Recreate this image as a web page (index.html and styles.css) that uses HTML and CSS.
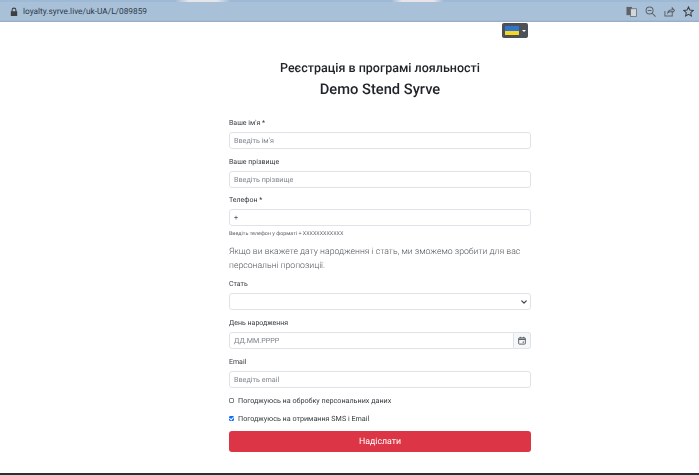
FILE: index.html
```html
<!DOCTYPE html>
<html lang="uk">
<head>
<meta charset="utf-8">
<title>Реєстрація</title>
<link rel="stylesheet" href="styles.css">
</head>
<body>
<header class="chrome">
  <div class="address">
    <svg class="lock" viewBox="0 0 10 12" width="8" height="10"><path fill="#3c4043" d="M2 5V3.5a3 3 0 0 1 6 0V5h1v6H1V5zm1.300 0h3.400V3.500a1.700 1.700 0 0 0-3.400 0z"/></svg>
    <span class="url">loyalty.syrve.live/uk-UA/L/089859</span>
  </div>
  <div class="tools">
    <svg viewBox="0 0 12 12" width="11" height="11"><rect x="0.500" y="1" width="6" height="9" fill="#5f6368"/><rect x="5" y="3" width="6.500" height="8.500" fill="#cfd6dc" stroke="#5f6368" stroke-width=".8"/></svg>
    <svg viewBox="0 0 12 12" width="11" height="11" fill="none" stroke="#5f6368" stroke-width="1.100"><circle cx="5" cy="5" r="3.800"/><path d="M8 8l3.500 3.500M3 5h4"/></svg>
    <svg viewBox="0 0 12 12" width="11" height="11" fill="none" stroke="#5f6368" stroke-width="1.100"><path d="M1 5.500v5.500h8V8M4 7.500C4.500 5 6.500 4 9 4V2l2.500 3L9 7.500V6C7 6 5.500 6.300 4 7.500z"/></svg>
    <svg viewBox="0 0 12 12" width="11" height="11" fill="none" stroke="#3c4043" stroke-width="1.100"><path d="M6 1l1.500 3.400 3.700.4-2.800 2.400.8 3.600L6 9l-3.200 1.800.8-3.600L.8 4.800l3.700-.4z"/></svg>
  </div>
</header>
<div class="langbar">
  <button class="lang" type="button">
    <span class="flag"><span class="flag-blue"></span><span class="flag-yellow"></span></span>
    <span class="caret"></span>
  </button>
</div>
<main class="page">
  <h1 class="title">Реєстрація в програмі лояльності</h1>
  <h2 class="subtitle">Demo Stend Syrve</h2>
  <form class="form">
    <div class="field">
      <label class="label">Ваше ім'я *</label>
      <input class="input" type="text" placeholder="Введіть ім'я">
    </div>
    <div class="field field-tight">
      <label class="label">Ваше прізвище</label>
      <input class="input" type="text" placeholder="Введіть прізвище">
    </div>
    <div class="field field-phone">
      <label class="label">Телефон *</label>
      <input class="input" type="text" value="+">
      <small class="hint">Введіть телефон у форматі + XXXXXXXXXXXX</small>
    </div>
    <p class="note">Якщо ви вкажете дату народження і стать, ми зможемо зробити для вас персональні пропозиції.</p>
    <div class="field">
      <label class="label">Стать</label>
      <div class="select">
        <svg viewBox="0 0 16 16" width="6" height="6" fill="none" stroke="#343a40" stroke-width="3" stroke-linecap="round" stroke-linejoin="round"><path d="M2 5l6 6 6-6"/></svg>
      </div>
    </div>
    <div class="field">
      <label class="label">День народження</label>
      <div class="group">
        <input class="input input-group" type="text" placeholder="ДД.ММ.РРРР">
        <span class="addon">
          <svg viewBox="0 0 12 12" width="8" height="9" fill="none" stroke="#495057" stroke-width="1.300"><rect x="1" y="2" width="10" height="9.400" rx="1"/><path d="M1 4.200h10" stroke-width="1.800"/><path d="M3.500 .5v2M8.500 .5v2"/><rect x="7" y="7.500" width="1.800" height="1.800" fill="#495057" stroke="none"/></svg>
        </span>
      </div>
    </div>
    <div class="field field-email">
      <label class="label">Email</label>
      <input class="input" type="text" placeholder="Введіть email">
    </div>
    <label class="check"><input class="box" type="checkbox"><span>Погоджуюсь на обробку персональних даних</span></label>
    <label class="check"><input class="box" type="checkbox" checked><span>Погоджуюсь на отримання SMS і Email</span></label>
    <button class="submit" type="button">Надіслати</button>
  </form>
</main>
<div class="taskbar"></div>
</body>
</html>
```
FILE: styles.css
```css
* { box-sizing: border-box; }
html, body { margin: 0; height: 100%; }
body {
  width: 699px;
  height: 475px;
  overflow: hidden;
  background: #fff;
  font-family: Roboto, "Noto Sans", sans-serif;
  color: #212529;
  display: flex;
  flex-direction: column;
  text-rendering: geometricPrecision;
  filter: blur(0.35px);
}
.chrome {
  height: 22px;
  flex: none;
  background:
    linear-gradient(90deg, #9db9d6 0, #9db9d6 25%, #e4e6ec 27%, #e4e6ec 31%, #9db9d6 33%, #9db9d6 56%, #e8e4ea 57.500%, #e8e4ea 62%, #9db9d6 63.500%, #9db9d6 100%) top / 100% 2px no-repeat,
    linear-gradient(#a9c1d8 0, #a9c1d8 90%, #93aac2 100%);
  display: flex;
  align-items: center;
  justify-content: space-between;
  padding: 1px 5px 0 10px;
}
.address { display: flex; align-items: center; gap: 5px; }
.lock { display: block; }
.url { font-size: 8.300px; color: #2f3a48; }
.tools { display: flex; gap: 8px; }
.tools svg { display: block; }
.langbar {
  flex: none;
  height: 16px;
  padding: 1px 171px 0 0;
  display: flex;
  justify-content: flex-end;
}
.lang {
  width: 26px;
  height: 15px;
  padding: 0 0 0 3px;
  border: 0;
  border-radius: 2px;
  background: #4c5157;
  display: flex;
  align-items: center;
  gap: 3px;
}
.flag { width: 14px; height: 9px; display: flex; flex-direction: column; }
.flag-blue { flex: 1; background: #2f75d0; }
.flag-yellow { flex: 1; background: #f7d81c; }
.caret { border: 2px solid transparent; border-top-color: #fff; border-bottom: 0; width: 0; height: 0; }
.page { width: 302px; margin-left: 229px; padding-top: 22px; flex: 1; }
.title { margin: 0; text-align: center; font-size: 12.500px; line-height: 17px; font-weight: 500; color: #212529; }
.subtitle { margin: 2px 0 0; text-align: center; font-size: 14.700px; line-height: 20px; font-weight: 500; color: #212529; }
.form { margin-top: 18px; display: flex; flex-direction: column; }
.field { display: flex; flex-direction: column; margin-bottom: 7px; }
.field-tight { margin-bottom: 6px; }
.label { font-size: 7px; line-height: 11px; margin: 1px 0 3px; color: #343a40; }
.input {
  width: 100%;
  height: 17px;
  border: 1px solid #dfe3e7;
  border-radius: 3px;
  padding: 0 4px;
  font: 7.200px Roboto, sans-serif;
  text-rendering: geometricPrecision;
  color: #495057;
  background: #fff;
  outline: 0;
}
.input::placeholder { color: #7d858d; opacity: 1; }
.field-phone { margin-bottom: 0; }
.hint { font-size: 5.400px; line-height: 8px; margin-top: 4px; color: #5f666d; }
.note { margin: 7px 0 5px; font-size: 8.700px; line-height: 14px; font-weight: 300; color: #4f555b; }
.select {
  height: 17px;
  border: 1px solid #dfe3e7;
  border-radius: 3px;
  display: flex;
  align-items: center;
  justify-content: flex-end;
  padding-right: 3px;
}
.group { display: flex; }
.input-group { flex: 1; border-radius: 3px 0 0 3px; }
.addon {
  width: 17px;
  height: 17px;
  border: 1px solid #dfe3e7;
  border-left: 0;
  border-radius: 0 3px 3px 0;
  background: #f6f7f8;
  display: flex;
  align-items: center;
  justify-content: center;
}
.field-email { margin-bottom: 7px; }
.check { display: flex; align-items: center; gap: 4px; font-size: 7.200px; line-height: 11px; color: #343a40; margin-bottom: 7px; }
.box {
  appearance: none;
  margin: 0;
  width: 5px;
  height: 5px;
  border: 1px solid #7d858d;
  border-radius: 1px;
  background: #fff;
  position: relative;
}
.box:checked { background: #0d6efd; border-color: #0d6efd; }
.box:checked::after {
  content: "";
  position: absolute;
  left: 0;
  top: -1px;
  width: 2px;
  height: 3px;
  border: solid #fff;
  border-width: 0 1px 1px 0;
  transform: rotate(45deg);
}
.submit {
  height: 21px;
  margin-top: 0;
  border: 0;
  border-radius: 3px;
  background: #dc3545;
  color: #fff;
  font: 8.800px Roboto, sans-serif;
  text-rendering: geometricPrecision;
}
.taskbar { flex: none; height: 2px; background: #2a3036; }
```
